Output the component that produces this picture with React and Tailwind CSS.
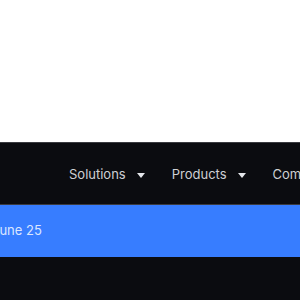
import React from 'react';

const Caret = () => (
  <svg width="8" height="5" viewBox="0 0 8 5" className="ml-[11px]">
    <path d="M0 0 H8 L4 5 Z" fill="#e5e7eb" />
  </svg>
);

const navItems = [
  { label: 'Solutions', caret: true },
  { label: 'Products', caret: true },
  { label: 'Company', caret: true },
];

const App = () => {
  return (
    <div className="w-[300px] h-[300px] overflow-hidden bg-white" style={{ fontFamily: 'Inter, "Liberation Sans", sans-serif' }}>
      <div className="h-[142px] bg-white" />
      <div className="h-[158px] bg-[#0b0c10] border-t border-[#3a3b40]">
        <nav className="h-[62px] flex items-center pt-[3px] pl-[69px] border-b border-[#3a3b40] whitespace-nowrap">
          {navItems.map(item => (
            <div key={item.label} className="flex items-center mr-[27px] text-[13px] text-[#cfd0d4]">
              <span>{item.label}</span>
              {item.caret && <Caret />}
            </div>
          ))}
        </nav>
        <div className="h-[52px] bg-[#377dff] flex items-center whitespace-nowrap">
          <span className="ml-[-8px] text-[13px] text-[#dbe6ff]">June 25</span>
        </div>
      </div>
    </div>
  );
};

export default App;
